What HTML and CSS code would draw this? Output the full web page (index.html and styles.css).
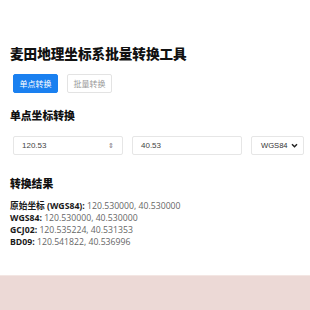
FILE: index.html
```html
<!DOCTYPE html>
<html lang="zh">
<head>
  <meta charset="UTF-8">
  <meta name="viewport" content="width=device-width, initial-scale=1.0">
  <title>坐标转换工具</title>
  <link rel="stylesheet" href="styles.css">
</head>
<body>

  <div class="page">
    <h1 class="title">麦田地理坐标系批量转换工具</h1>

    <div class="tabs">
      <button class="tab active">单点转换</button>
      <button class="tab">批量转换</button>
    </div>

    <h2 class="section-title">单点坐标转换</h2>
    <div class="inputs">
      <div class="field number">
        <span>120.53</span>
        <span class="spin">&#8661;</span>
      </div>
      <div class="field"><span>40.53</span></div>
      <div class="field select">
        <span>WGS84</span>
        <svg width="7" height="5" viewBox="0 0 8 6"><path d="M1 1.5 L4 4.5 L7 1.5" fill="none" stroke="#222" stroke-width="1.8"/></svg>
      </div>
    </div>

    <h2 class="section-title result-title">转换结果</h2>
    <div class="results">
      <p><b>原始坐标 (WGS84):</b> 120.530000, 40.530000</p>
      <p><b>WGS84:</b> 120.530000, 40.530000</p>
      <p><b>GCJ02:</b> 120.535224, 40.531353</p>
      <p><b>BD09:</b> 120.541822, 40.536996</p>
    </div>
  </div>

  <div class="footer-band"></div>

</body>
</html>
```

FILE: styles.css
```css
* {
  margin: 0;
  padding: 0;
  box-sizing: border-box;
}

body {
  font-family: "Open Sans", "Noto Sans CJK SC", sans-serif;
  background-color: #fff;
  color: #222;
  width: 310px;
  height: 310px;
  overflow: hidden;
  display: flex;
  flex-direction: column;
}

.page {
  padding: 44px 4px 0 10px;
  flex: 1;
}

.title {
  font-size: 13.6px;
  font-weight: 900;
  line-height: 19px;
  color: #111;
}

.tabs {
  display: flex;
  gap: 9px;
  margin: 11px 0 0 3px;
}

.tab {
  font-family: "Noto Sans CJK SC", sans-serif;
  font-size: 8px;
  height: 19px;
  width: 45px;
  border: 1px solid #e3e3e3;
  border-radius: 2px;
  background: #fff;
  color: #999;
}

.tab.active {
  background: #1a80f0;
  border-color: #1a80f0;
  color: #fff;
}

.section-title {
  font-size: 10.8px;
  font-weight: 900;
  line-height: 16px;
  margin-top: 15px;
  color: #111;
}

.inputs {
  display: flex;
  gap: 9px;
  margin: 12px 0 0 3px;
}

.field {
  flex: none;
  height: 19px;
  width: 110px;
  border: 1px solid #e6e6e6;
  border-radius: 2px;
  display: flex;
  align-items: center;
  justify-content: space-between;
  padding: 0 8px;
  font-family: "Liberation Sans", sans-serif;
  font-size: 8px;
  color: #444;
}

.spin {
  font-size: 7px;
  color: #777;
}

.field.select {
  width: 53px;
  padding: 0 5px 0 9px;
  font-size: 7.6px;
  color: #333;
}

.result-title {
  margin-top: 21px;
}

.results {
  margin-top: 8px;
  font-size: 8.7px;
  line-height: 12px;
  color: #666;
}

.results b {
  color: #1a1a1a;
  font-weight: 700;
}

.footer-band {
  height: 35px;
  background-color: #ecd9d6;
  border-top: 1px solid #f3e6e3;
}
```
